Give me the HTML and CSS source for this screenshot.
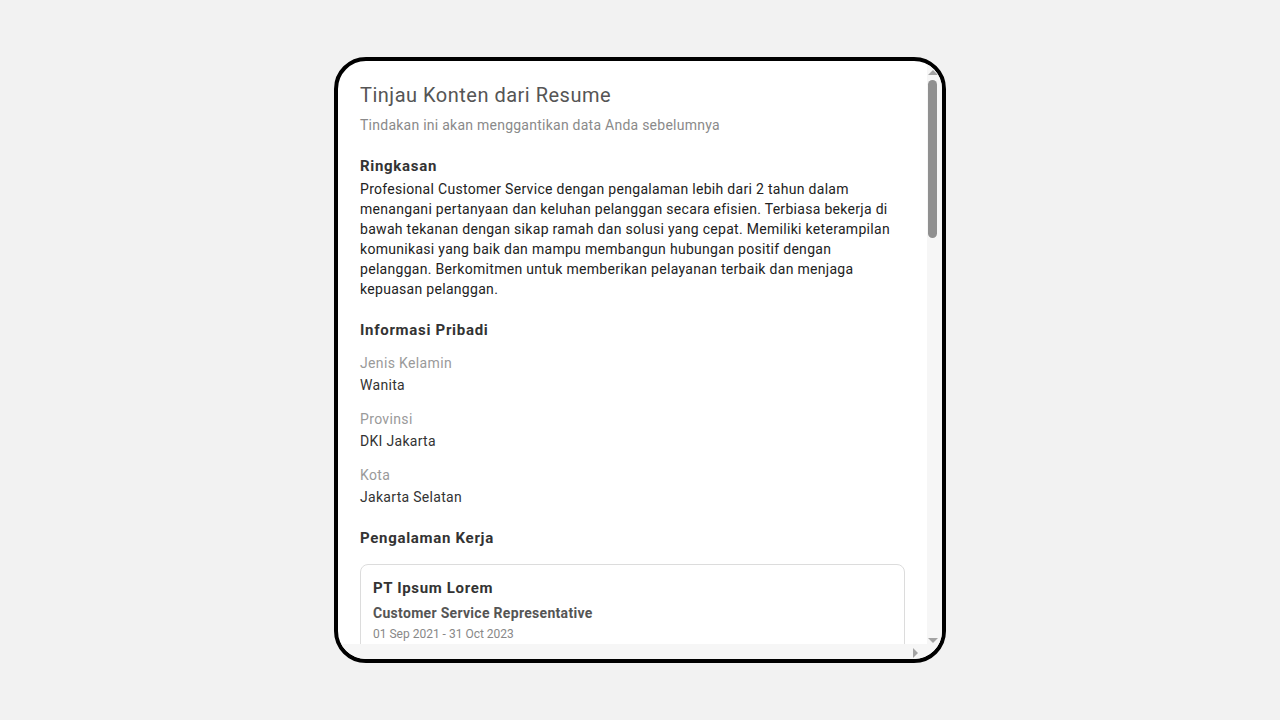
FILE: index.html
```html
<!DOCTYPE html>
<html lang="id">
<head>
<meta charset="utf-8">
<title>Tinjau Konten dari Resume</title>
<link rel="stylesheet" href="styles.css">
</head>
<body>
<div class="stage">
  <div class="modal">
    <div class="body-row">
      <div class="viewport">
        <div class="content">
          <h1 class="title">Tinjau Konten dari Resume</h1>
          <p class="subtitle">Tindakan ini akan menggantikan data Anda sebelumnya</p>

          <section class="section">
            <h2 class="heading">Ringkasan</h2>
            <p class="summary">Profesional Customer Service dengan pengalaman lebih dari 2 tahun dalam menangani pertanyaan dan keluhan pelanggan secara efisien. Terbiasa bekerja di bawah tekanan dengan sikap ramah dan solusi yang cepat. Memiliki keterampilan komunikasi yang baik dan mampu membangun hubungan positif dengan pelanggan. Berkomitmen untuk memberikan pelayanan terbaik dan menjaga kepuasan pelanggan.</p>
          </section>

          <section class="section">
            <h2 class="heading">Informasi Pribadi</h2>
            <div class="fields">
              <div class="field"><span class="label">Jenis Kelamin</span><span class="value">Wanita</span></div>
              <div class="field"><span class="label">Provinsi</span><span class="value">DKI Jakarta</span></div>
              <div class="field"><span class="label">Kota</span><span class="value">Jakarta Selatan</span></div>
            </div>
          </section>

          <section class="section">
            <h2 class="heading">Pengalaman Kerja</h2>
            <div class="cards">
              <div class="card">
                <div class="company">PT Ipsum Lorem</div>
                <div class="role">Customer Service Representative</div>
                <div class="date">01 Sep 2021 - 31 Oct 2023</div>
                <p class="desc">Menangani pertanyaan dan keluhan pelanggan melalui telepon, email, dan live chat.</p>
              </div>
            </div>
          </section>
        </div>
      </div>
      <div class="vbar" aria-hidden="true">
        <div class="sb-btn sb-up">
          <svg width="10" height="5" viewBox="0 0 10 5"><polygon points="5,0 10,5 0,5" fill="#a3a3a3"/></svg>
        </div>
        <div class="vtrack"><div class="vthumb"></div></div>
        <div class="sb-btn sb-down">
          <svg width="10" height="5" viewBox="0 0 10 5"><polygon points="0,0 10,0 5,5" fill="#a3a3a3"/></svg>
        </div>
      </div>
    </div>
    <div class="hbar" aria-hidden="true">
      <div class="hbtn hbtn-left"></div>
      <div class="htrack"></div>
      <div class="hbtn hbtn-right">
        <svg width="5" height="10" viewBox="0 0 5 10"><polygon points="0,0 5,5 0,10" fill="#a3a3a3"/></svg>
      </div>
      <div class="hcorner"></div>
    </div>
  </div>
</div>
</body>
</html>
```

FILE: styles.css
```css
html, body {
  margin: 0;
  padding: 0;
  background: #f2f2f2;
  font-family: Roboto, "Liberation Sans", sans-serif;
}

.stage {
  height: 720px;
  display: flex;
  align-items: center;
  justify-content: center;
}

.modal {
  width: 612px;
  height: 606px;
  box-sizing: border-box;
  border: 4px solid #000;
  border-radius: 32px;
  background: #fff;
  overflow: hidden;
  display: flex;
  flex-direction: column;
}

.body-row {
  flex: 1;
  min-height: 0;
  display: flex;
}

.viewport {
  flex: 1;
  min-width: 0;
  overflow: hidden;
}

.content {
  padding: 20px 22px 24px 22px;
}

/* drawn scrollbars */
.vbar {
  width: 15px;
  flex: none;
  background: #f6f6f6;
  display: flex;
  flex-direction: column;
}

.sb-btn {
  height: 19px;
  flex: none;
  display: flex;
  padding-left: 1px;
  box-sizing: border-box;
  align-items: flex-start;
}

.sb-up {
  padding-top: 9px;
}

.sb-down {
  padding-top: 13px;
}

.sb-btn svg,
.hbtn svg {
  display: block;
}

.vtrack {
  flex: 1;
  padding-left: 1px;
}

.vthumb {
  width: 9px;
  height: 158px;
  border-radius: 5px;
  background: #909090;
}

.hbar {
  height: 15px;
  flex: none;
  display: flex;
  background: #f6f6f6;
}

.hbtn {
  width: 19px;
  flex: none;
  display: flex;
  align-items: center;
  box-sizing: border-box;
}

.hbtn-right {
  padding-left: 5px;
  padding-top: 2px;
}

.htrack {
  flex: 1;
}

.hcorner {
  width: 15px;
  flex: none;
}

/* content */
.title {
  margin: 0;
  font-size: 20px;
  line-height: 28px;
  font-weight: 400;
  letter-spacing: 0.5px;
  color: #555;
}

.subtitle {
  margin: 6px 0 0 0;
  font-size: 14px;
  line-height: 20px;
  letter-spacing: 0.25px;
  color: #8a8a8a;
}

.section {
  margin-top: 20px;
}

.heading {
  margin: 0;
  font-size: 15px;
  line-height: 22px;
  font-weight: 700;
  letter-spacing: 0.7px;
  color: #333;
}

.summary {
  margin: 2px 0 0 0;
  font-size: 14px;
  line-height: 20px;
  letter-spacing: 0.3px;
  color: #222;
}

.fields {
  display: flex;
  flex-direction: column;
  gap: 14px;
  margin-top: 12px;
}

.field {
  display: flex;
  flex-direction: column;
  gap: 2px;
}

.label {
  font-size: 14px;
  line-height: 20px;
  letter-spacing: 0.35px;
  color: #9a9a9a;
}

.value {
  font-size: 14px;
  line-height: 20px;
  letter-spacing: 0.3px;
  color: #333;
}

.cards {
  display: flex;
  flex-direction: column;
  gap: 12px;
  margin-top: 15px;
}

.card {
  border: 1px solid #dcdcdc;
  border-radius: 8px;
  padding: 12px 12px 14px 12px;
}

.company {
  font-size: 15px;
  line-height: 22px;
  font-weight: 700;
  letter-spacing: 0.65px;
  color: #333;
}

.role {
  margin-top: 4px;
  font-size: 14px;
  line-height: 20px;
  font-weight: 700;
  letter-spacing: 0.3px;
  color: #555;
}

.date {
  margin-top: 2px;
  font-size: 12px;
  line-height: 18px;
  color: #888;
}

.desc {
  margin: 8px 0 0 0;
  font-size: 14px;
  line-height: 20px;
  letter-spacing: 0.3px;
  color: #333;
}
```
